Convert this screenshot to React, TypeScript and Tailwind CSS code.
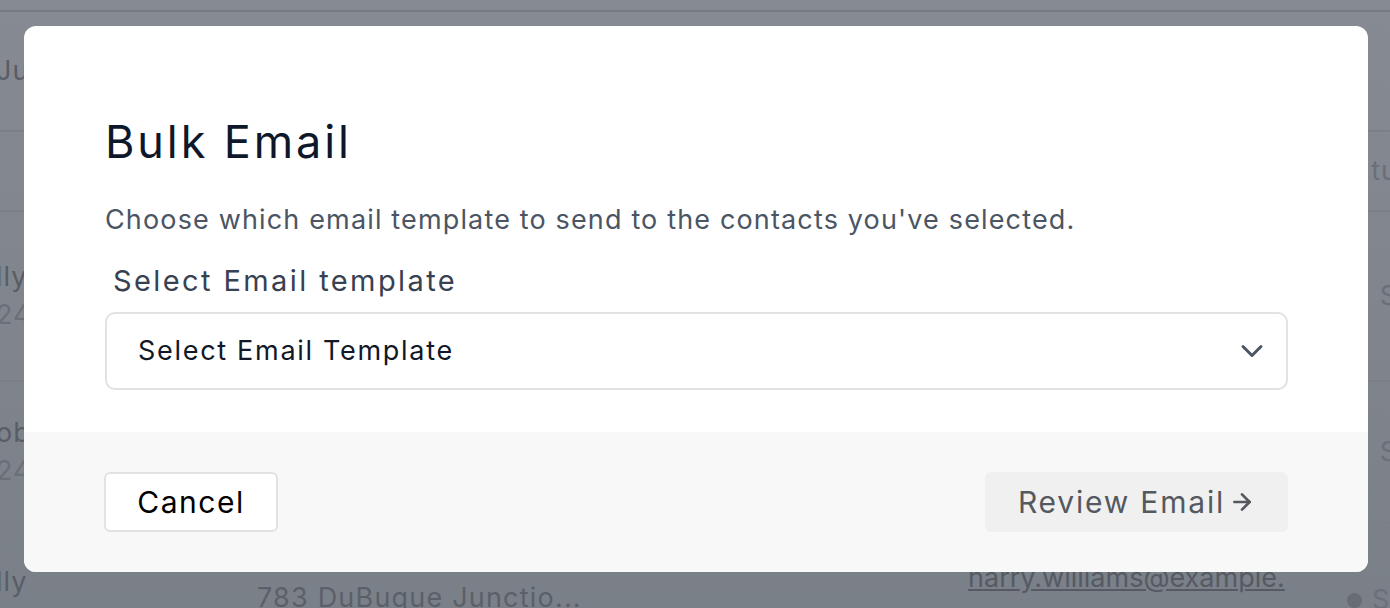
import { ChevronDown, ArrowRight } from 'lucide-react';

const rows = [
  { h: 'h-[120px]', left: 'Ju', right: '' },
  { h: 'h-[80px]', left: '', right: 'tu' },
  { h: 'h-[170px]', left: 'lly', sub: '24', right: 'S' },
  { h: 'h-[142px]', left: 'ob', sub: '24', right: 'S' },
];

const App = () => {
  return (
    <div className="relative w-[1390px] h-[608px] overflow-hidden bg-gradient-to-b from-[#868a93] to-[#7a8088] font-['Inter',sans-serif] text-[#585d66]">
      {/* Page behind the overlay */}
      <div className="pt-[10px]">
        <div className="border-t-2 border-[#767b84]">
          {rows.map((row, i) => (
            <div key={i} className={`${row.h} flex items-center justify-between border-b-2 border-[#7a7f88] text-[27px] tracking-[1px]`}>
              <div className="flex flex-col -ml-[4px] leading-[38px]">
                <span>{row.left}</span>
                {row.sub && <span className="text-[#6a6f78]">{row.sub}</span>}
              </div>
              <span className="mr-[-8px] text-[#6a6f78]">{row.right}</span>
            </div>
          ))}
          <div className="h-[90px] flex items-start text-[27px] tracking-[1px] pt-[38px]">
            <span className="-ml-[4px]">lly</span>
          </div>
        </div>
      </div>
      <div className="absolute left-[257px] top-[578px] text-[27px] tracking-[1.2px] text-[#5b6068]">783 DuBuque Junctio...</div>
      <div className="absolute left-[968px] top-[558px] text-[27px] tracking-[0px] text-[#555a63] underline">harry.williams@example.</div>
      <div className="absolute left-[1347px] top-[580px] flex items-center gap-[10px] text-[27px] text-[#6a6f78]">
        <span className="w-[15px] h-[15px] rounded-full bg-[#676c75]" />
        <span>S</span>
      </div>

      {/* Modal */}
      <div className="absolute left-[24px] top-[26px] w-[1344px] h-[546px] rounded-[12px] bg-white overflow-hidden flex flex-col">
        <div className="flex-1 px-[81px] pt-[86px]">
          <h2 className="text-[45px] leading-[60px] font-normal text-[#0f172a] tracking-[2.9px]">Bulk Email</h2>
          <p className="mt-[30px] text-[27px] leading-[36px] text-[#4b5563] tracking-[1.15px]">
            Choose which email template to send to the contacts you've selected.
          </p>
          <label className="block mt-[23px] ml-[8px] text-[29px] leading-[40px] text-[#374151] tracking-[2.4px]">
            Select Email template
          </label>
          <button className="mt-[11px] w-[1183px] h-[78px] rounded-[10px] border-2 border-[#e2e2e2] flex items-center justify-between pl-[31px] pr-[16px]">
            <span className="text-[27px] text-[#111827] tracking-[1.7px]">Select Email Template</span>
            <ChevronDown className="w-[36px] h-[36px] text-[#4b5563]" strokeWidth={2} />
          </button>
        </div>
        <div className="h-[140px] bg-[#f8f8f8] px-[80px] flex items-center justify-between">
          <button className="w-[174px] h-[60px] rounded-[6px] border-2 border-[#e2e2e2] bg-white text-[30px] text-black tracking-[1.5px]">
            Cancel
          </button>
          <button className="w-[303px] h-[60px] rounded-[6px] bg-[#f0f0f0] flex items-center justify-center gap-[4px] text-[30px] text-[#55585e] tracking-[1.8px]">
            Review Email
            <ArrowRight className="w-[26px] h-[26px]" strokeWidth={2.5} />
          </button>
        </div>
      </div>
    </div>
  );
};

export default App;
